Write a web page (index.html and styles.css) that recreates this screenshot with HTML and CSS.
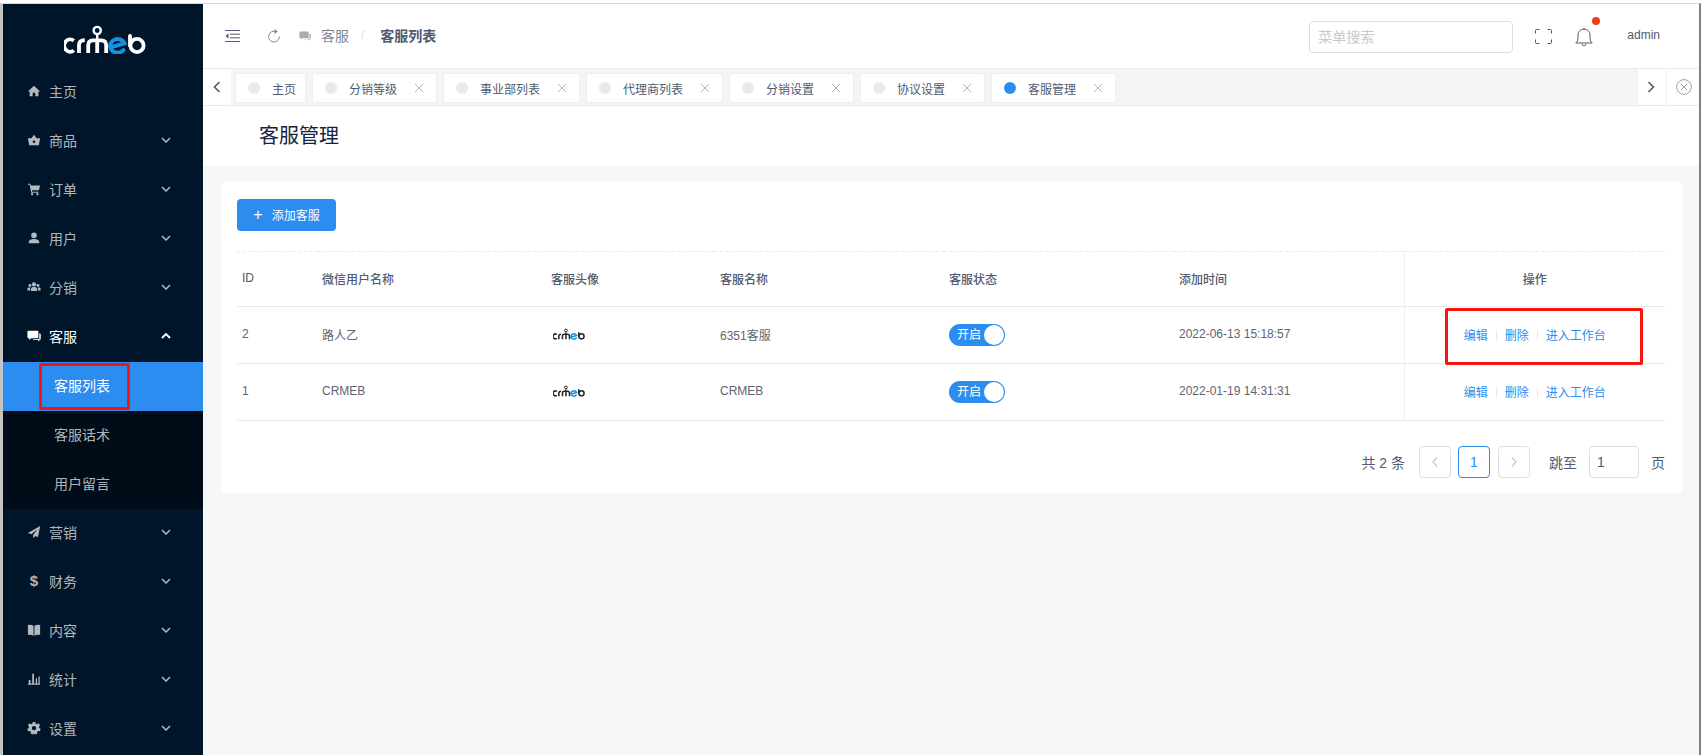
FILE: index.html
```html
<!DOCTYPE html>
<html lang="zh">
<head>
  <meta charset="UTF-8">
  <title>客服列表</title>
  <link rel="stylesheet" href="styles.css">
</head>
<body>
  <svg class="sprite" width="0" height="0">
    <symbol id="logo" viewBox="0 0 82 29">
      <g fill="none" stroke="currentColor" stroke-width="3.8">
        <path d="M9.8 15.8 A5.8 6.2 0 1 0 9.8 25.4"/>
        <path d="M15 28 V20 Q15 15.2 20.8 15.2"/>
        <path d="M24.2 28 V20.5 Q24.2 15.4 29 15.4 H37.4 Q42.2 15.4 42.2 20.5 V28 M33.2 15.4 V28"/>
      </g>
      <circle cx="33.2" cy="5.5" r="3.6" fill="none" stroke="currentColor" stroke-width="2.4"/>
      <path d="M33.2 9 V14" stroke="currentColor" stroke-width="2.4"/>
      <path d="M47.5 22 L60.5 18.5 A7.4 6.8 0 1 0 59.5 25" fill="none" stroke="#1890e0" stroke-width="4" stroke-linecap="round"/>
      <g fill="none" stroke="currentColor" stroke-width="3.8" stroke-linecap="round">
        <path d="M66 11 V20.5"/>
        <circle cx="73" cy="20.5" r="6.6"/>
      </g>
    </symbol>
    <symbol id="i-home" viewBox="0 0 16 16"><path d="M8 2 L1 8.5 H3 V14 H6.5 V10 H9.5 V14 H13 V8.5 H15 Z"/></symbol>
    <symbol id="i-basket" viewBox="0 0 16 16"><path d="M5 6 L8 2 L11 6 H15 L13.5 14 H2.5 L1 6 Z M8 8.5 A1.5 1.5 0 1 0 8 11.5 A1.5 1.5 0 1 0 8 8.5 Z" fill-rule="evenodd"/></symbol>
    <symbol id="i-cart" viewBox="0 0 16 16"><path d="M1 2 H3.8 L4.3 4 H15 L13.5 9.5 H5.6 L5.9 11 H13 V12.2 H4.8 L3 3.2 H1 Z"/><circle cx="5.8" cy="14" r="1.3"/><circle cx="12" cy="14" r="1.3"/></symbol>
    <symbol id="i-user" viewBox="0 0 16 16"><circle cx="8" cy="5" r="3.2"/><path d="M2 14 V12.5 C2 10 5 9 8 9 C11 9 14 10 14 12.5 V14 Z"/></symbol>
    <symbol id="i-team" viewBox="0 0 16 16"><circle cx="8" cy="5" r="2.4"/><circle cx="3.4" cy="6.2" r="1.7"/><circle cx="12.6" cy="6.2" r="1.7"/><path d="M4.6 12.5 V10 C4.6 8.6 6 8 8 8 C10 8 11.4 8.6 11.4 10 V12.5 Z M0.5 12 V9.8 C0.5 8.8 1.8 8.4 3.6 8.6 V12 Z M15.5 12 V9.8 C15.5 8.8 14.2 8.4 12.4 8.6 V12 Z"/></symbol>
    <symbol id="i-chat" viewBox="0 0 16 16"><path d="M1.5 2 H12 Q13 2 13 3 V9.5 Q13 10.5 12 10.5 H5 L2.5 12.5 V10.5 H1.5 Q0.5 10.5 0.5 9.5 V3 Q0.5 2 1.5 2 Z"/><path d="M14 5 H15 Q15.7 5 15.7 5.8 V11.5 Q15.7 12.2 15 12.2 H14 V14.3 L11.8 12.2 H6.5 L7 11.5 H14 Z"/></symbol>
    <symbol id="i-send" viewBox="0 0 16 16"><path d="M15 1 L1 9 L5 10.5 L12 4.5 L7 11.5 V15 L9.5 12.5 L12.5 14 Z"/></symbol>
    <symbol id="i-book" viewBox="0 0 16 16"><path d="M1 2.2 Q5 1.8 7.5 3.2 V14.5 Q5 13.2 1 13.5 Z M15 2.2 Q11 1.8 8.5 3.2 V14.5 Q11 13.2 15 13.5 Z"/></symbol>
    <symbol id="i-stats" viewBox="0 0 16 16"><path d="M1 13 H15 V14.5 H1 Z M2 9 H4 V13 H2 Z M6 2 H8 V13 H6 Z M10 7 H11.5 V13 H10 Z M13 5 H14.5 V13 H13 Z"/></symbol>
    <symbol id="i-gear" viewBox="0 0 16 16"><path fill-rule="evenodd" d="M6.6 1 H9.4 L9.8 3 L11.4 3.7 L13.1 2.6 L15 4.9 L13.7 6.4 L14 8 L15.6 9 L14.7 11.7 L12.7 11.5 L11.5 12.7 L11.7 14.6 L9 15.4 L8 14 H7.9 L7 15.4 L4.3 14.6 L4.5 12.7 L3.3 11.5 L1.3 11.7 L0.4 9 L2 8 L2.3 6.4 L1 4.9 L2.9 2.6 L4.6 3.7 L6.2 3 Z M8 5.6 A2.5 2.5 0 1 0 8 10.6 A2.5 2.5 0 1 0 8 5.6 Z"/></symbol>
    <symbol id="i-down" viewBox="0 0 10 6"><path d="M1 1 L5 5 L9 1" fill="none" stroke="currentColor" stroke-width="1.5"/></symbol>
    <symbol id="i-up" viewBox="0 0 10 6"><path d="M1 5 L5 1 L9 5" fill="none" stroke="currentColor" stroke-width="1.8"/></symbol>
    <symbol id="i-close" viewBox="0 0 10 10"><path d="M1 1 L9 9 M9 1 L1 9" fill="none" stroke="currentColor" stroke-width="0.9"/></symbol>
  </svg>

  <div class="window">
    <aside class="sidebar">
      <div class="brand"><svg class="brand-logo"><use href="#logo"/></svg></div>
      <nav>
        <a class="menu-item"><svg class="menu-icon"><use href="#i-home"/></svg><span>主页</span></a>
        <a class="menu-item"><svg class="menu-icon"><use href="#i-basket"/></svg><span>商品</span><svg class="chevron"><use href="#i-down"/></svg></a>
        <a class="menu-item"><svg class="menu-icon"><use href="#i-cart"/></svg><span>订单</span><svg class="chevron"><use href="#i-down"/></svg></a>
        <a class="menu-item"><svg class="menu-icon"><use href="#i-user"/></svg><span>用户</span><svg class="chevron"><use href="#i-down"/></svg></a>
        <a class="menu-item"><svg class="menu-icon"><use href="#i-team"/></svg><span>分销</span><svg class="chevron"><use href="#i-down"/></svg></a>
        <a class="menu-item open"><svg class="menu-icon"><use href="#i-chat"/></svg><span>客服</span><svg class="chevron"><use href="#i-up"/></svg></a>
        <div class="submenu">
          <a class="sub-item active">客服列表<i class="mark mark-menu"></i></a>
          <a class="sub-item">客服话术</a>
          <a class="sub-item">用户留言</a>
        </div>
        <a class="menu-item"><svg class="menu-icon"><use href="#i-send"/></svg><span>营销</span><svg class="chevron"><use href="#i-down"/></svg></a>
        <a class="menu-item"><b class="menu-icon dollar">$</b><span>财务</span><svg class="chevron"><use href="#i-down"/></svg></a>
        <a class="menu-item"><svg class="menu-icon"><use href="#i-book"/></svg><span>内容</span><svg class="chevron"><use href="#i-down"/></svg></a>
        <a class="menu-item"><svg class="menu-icon"><use href="#i-stats"/></svg><span>统计</span><svg class="chevron"><use href="#i-down"/></svg></a>
        <a class="menu-item"><svg class="menu-icon"><use href="#i-gear"/></svg><span>设置</span><svg class="chevron"><use href="#i-down"/></svg></a>
      </nav>
    </aside>

    <main class="main">
      <header class="topbar">
        <svg class="fold-icon" viewBox="0 0 15 12"><path d="M0 .5 H15 M5 4.2 H15 M5 7.8 H15 M0 11.5 H15" fill="none" stroke="#515a6e" stroke-width="1"/><path d="M3.5 3.6 L0.5 6 L3.5 8.4 Z" fill="#515a6e"/></svg>
        <svg class="refresh-icon" viewBox="0 0 14 14"><path d="M9 2.6 A5.4 5.4 0 1 0 12.4 7.5" fill="none" stroke="#808695" stroke-width="1"/><path d="M7.5 0 L10.8 2.6 L7.5 5 Z" fill="#808695"/></svg>
        <svg class="crumb-icon"><use href="#i-chat"/></svg>
        <span class="crumb">客服</span>
        <span class="crumb-sep">/</span>
        <span class="crumb-current">客服列表</span>
        <div class="topbar-right">
          <div class="search">菜单搜索</div>
          <svg class="full-icon" viewBox="0 0 17 15"><path d="M.5 4.5 V1.5 Q.5 .5 1.5 .5 H4.5 M12.5 .5 H15.5 Q16.5 .5 16.5 1.5 V4.5 M16.5 10.5 V13.5 Q16.5 14.5 15.5 14.5 H12.5 M4.5 14.5 H1.5 Q.5 14.5 .5 13.5 V10.5" fill="none" stroke="#515a6e" stroke-width="1"/></svg>
          <span class="bell">
            <svg class="bell-icon" viewBox="0 0 18 20"><path d="M.8 16 Q3 14.5 3 11 V8 A6 6 0 0 1 15 8 V11 Q15 14.5 17.2 16 Z M9 2 V1 M6.8 17 Q9 20.5 11.2 17" fill="none" stroke="#515a6e" stroke-width="1"/></svg>
            <i class="bell-dot"></i>
          </span>
          <span class="user-name">admin</span>
        </div>
      </header>

      <div class="tabs">
        <div class="tab-arrow"><svg viewBox="0 0 8 12"><path d="M6.5 1 L1.5 6 L6.5 11" fill="none" stroke="#515a6e" stroke-width="1.6"/></svg></div>
        <div class="tab-list">
          <div class="tab home-tab"><i class="dot"></i>主页</div>
          <div class="tab"><i class="dot"></i>分销等级<svg class="tab-close"><use href="#i-close"/></svg></div>
          <div class="tab"><i class="dot"></i>事业部列表<svg class="tab-close"><use href="#i-close"/></svg></div>
          <div class="tab"><i class="dot"></i>代理商列表<svg class="tab-close"><use href="#i-close"/></svg></div>
          <div class="tab"><i class="dot"></i>分销设置<svg class="tab-close"><use href="#i-close"/></svg></div>
          <div class="tab"><i class="dot"></i>协议设置<svg class="tab-close"><use href="#i-close"/></svg></div>
          <div class="tab"><i class="dot dot-on"></i>客服管理<svg class="tab-close"><use href="#i-close"/></svg></div>
        </div>
        <div class="tab-arrow tab-next"><svg viewBox="0 0 8 12"><path d="M1.5 1 L6.5 6 L1.5 11" fill="none" stroke="#515a6e" stroke-width="1.6"/></svg></div>
        <div class="tab-arrow tab-end"><svg viewBox="0 0 16 16"><circle cx="8" cy="8" r="7.4" fill="none" stroke="#808695" stroke-width=".8"/><path d="M5 5 L11 11 M11 5 L5 11" fill="none" stroke="#808695" stroke-width=".8"/></svg></div>
      </div>

      <div class="page-title">客服管理</div>

      <div class="content">
        <section class="card">
          <button class="add-btn"><span class="plus">+</span>添加客服</button>
          <table class="list">
            <colgroup>
              <col class="c-id"><col class="c-name"><col class="c-avatar"><col class="c-nick"><col class="c-status"><col class="c-time"><col class="c-ops">
            </colgroup>
            <thead>
              <tr>
                <th class="plain">ID</th><th>微信用户名称</th><th>客服头像</th><th>客服名称</th><th>客服状态</th><th>添加时间</th><th class="ops">操作</th>
              </tr>
            </thead>
            <tbody>
              <tr>
                <td>2</td><td>路人乙</td>
                <td><svg class="avatar"><use href="#logo"/></svg></td>
                <td>6351客服</td>
                <td><span class="switch">开启<i></i></span></td>
                <td>2022-06-13 15:18:57</td>
                <td class="ops"><a>编辑</a><i class="bar"></i><a>删除</a><i class="bar"></i><a>进入工作台</a><i class="mark mark-ops"></i></td>
              </tr>
              <tr>
                <td>1</td><td>CRMEB</td>
                <td><svg class="avatar"><use href="#logo"/></svg></td>
                <td>CRMEB</td>
                <td><span class="switch">开启<i></i></span></td>
                <td>2022-01-19 14:31:31</td>
                <td class="ops"><a>编辑</a><i class="bar"></i><a>删除</a><i class="bar"></i><a>进入工作台</a></td>
              </tr>
            </tbody>
          </table>
          <div class="pager">
            <span class="total">共 2 条</span>
            <span class="page-btn"><svg viewBox="0 0 8 12"><path d="M6 1.5 L2 6 L6 10.5" fill="none" stroke="#c5c8ce" stroke-width="1.2"/></svg></span>
            <span class="page-btn current">1</span>
            <span class="page-btn"><svg viewBox="0 0 8 12"><path d="M2 1.5 L6 6 L2 10.5" fill="none" stroke="#c5c8ce" stroke-width="1.2"/></svg></span>
            <span class="jump">跳至</span>
            <span class="jump-input">1</span>
            <span class="jump-end">页</span>
          </div>
        </section>
      </div>
    </main>
  </div>
</body>
</html>
```
FILE: styles.css
```css
* { box-sizing: border-box; }
html, body { height: 100%; }
body {
  margin: 0;
  padding-top: 3px;
  overflow: hidden;
  background: #fff;
  font-family: "Liberation Sans", "Noto Sans CJK SC", sans-serif;
  font-size: 12px;
  color: #515a6e;
}
i { font-style: normal; }
.sprite { position: absolute; }

.window {
  display: flex;
  height: 752px;
  border-top: 1px solid #d9d9d9;
  border-left: 3px solid #c4c4c4;
  border-right: 2px solid #808080;
}

/* sidebar */
.sidebar {
  width: 200px;
  flex: none;
  background: #001529;
  color: rgba(255, 255, 255, .7);
  font-size: 14px;
}
.brand {
  height: 64px;
  padding: 21px 0 0 61px;
}
.brand-logo { display: block; width: 82px; height: 29px; color: #fff; }
.menu-item {
  display: flex;
  align-items: center;
  height: 49px;
  padding: 0 0 3px 24px;
}
.menu-item span { margin-left: 8px; }
.menu-item.open { color: #fff; }
.menu-icon {
  width: 14px;
  height: 14px;
  fill: currentColor;
  text-align: center;
  line-height: 14px;
}
.dollar { font-size: 15px; }
.chevron { width: 10px; height: 6px; margin-left: auto; margin-right: 32px; }
.submenu { background: #000c17; }
.sub-item {
  position: relative;
  display: block;
  height: 49px;
  line-height: 49px;
  padding-left: 51px;
}
.sub-item.active { background: #2d8cf0; color: #fff; }
.mark {
  position: absolute;
  border: 3px solid #f5140f;
  border-radius: 2px;
}
.mark-menu { left: 36px; top: 1px; width: 91px; height: 47px; }

/* top bar */
.main { flex: 1; min-width: 0; display: flex; flex-direction: column; background: #f5f7f9; }
.topbar {
  display: flex;
  align-items: center;
  height: 64px;
  padding-left: 22px;
  background: #fff;
  font-size: 12px;
}
.fold-icon { width: 15px; height: 12px; }
.refresh-icon { width: 14px; height: 14px; margin-left: 27px; }
.crumb-icon { width: 12px; height: 12px; margin-left: 18px; fill: #a8abb2; }
.crumb { margin: 0 0 2px 10px; color: #808695; font-size: 14px; }
.crumb-sep { margin: 0 0 2px 12px; color: #dcdee2; }
.crumb-current { margin: 0 0 2px 16px; font-size: 14px; font-weight: 700; color: #515a6e; }
.topbar-right { display: flex; align-items: center; margin-left: auto; }
.search {
  width: 204px;
  height: 32px;
  padding: 0 8px;
  margin-top: 1px;
  border: 1px solid #dcdee2;
  border-radius: 4px;
  color: #c5c8ce;
  font-size: 14px;
  line-height: 30px;
}
.full-icon { width: 17px; height: 15px; margin-left: 22px; }
.bell { position: relative; display: block; width: 18px; height: 20px; margin-left: 23px; margin-top: 2px; }
.bell-icon { display: block; width: 18px; height: 20px; }
.bell-dot {
  position: absolute;
  right: -7px;
  top: -10px;
  width: 8px;
  height: 8px;
  border-radius: 50%;
  background: #ed4014;
}
.user-name { margin-left: 34px; margin-right: 39px; margin-bottom: 2px; }

/* tabs */
.tabs {
  display: flex;
  height: 38px;
  background: #f3f4f6;
  border-top: 1px solid #ebebeb;
  border-bottom: 1px solid #e8eaec;
}
.tab-arrow {
  display: flex;
  align-items: center;
  justify-content: center;
  width: 28px;
  flex: none;
  background: #fff;
}
.tab-arrow svg { width: 8px; height: 12px; }
.tab-next { margin-left: auto; width: 29px; padding-right: 2px; border-right: 1px solid #eee; }
.tab-end { width: 32px; padding-left: 2px; }
.tab-end svg { width: 16px; height: 16px; }
.tab-list { display: flex; gap: 6px; padding: 4px 0 0 4px; }
.tab {
  display: flex;
  align-items: center;
  height: 30px;
  padding: 0 12px 0 12px;
  background: #fff;
  border-radius: 2px;
  border: 1px solid #eceef1;
}
.home-tab { padding-right: 9px; }
.dot {
  width: 12px;
  height: 12px;
  margin-right: 12px;
  border-radius: 50%;
  background: #e8eaec;
}
.dot-on { background: #2d8cf0; }
.tab-close { width: 10px; height: 10px; margin-left: 17px; color: #a8abb2; }

.page-title {
  height: 60px;
  padding-left: 56px;
  background: #fff;
  color: #17233d;
  font-size: 20px;
  line-height: 60px;
}

/* card */
.content { padding: 16px 17px 0 18px; }
.card {
  height: 311px;
  padding: 17px 16px 0;
  background: #fff;
  border-radius: 4px;
}
.add-btn {
  display: block;
  width: 99px;
  height: 32px;
  padding: 0;
  border: none;
  border-radius: 4px;
  background: #2d8cf0;
  color: #fff;
  font: inherit;
}
.plus { margin-right: 9px; font-size: 16px; font-weight: 400; }
.list {
  width: 1428px;
  margin-top: 20px;
  border-collapse: collapse;
  table-layout: fixed;
  border-top: 1px dashed #e8eaec;
}
.c-id { width: 80px; }
.c-name { width: 229px; }
.c-avatar { width: 169px; }
.c-nick { width: 229px; }
.c-status { width: 230px; }
.c-time { width: 230px; }
.c-ops { width: 261px; }
.list th, .list td {
  height: 57px;
  padding: 0 5px 2px;
  text-align: left;
  border-bottom: 1px solid #e8eaec;
  font-size: 12px;
  color: #606470;
}
.list th { height: 55px; font-weight: 500; color: #515a6e; }
.list th.plain { font-weight: 400; }
.list .ops {
  position: relative;
  text-align: center;
  border-left: 1px solid #f0f0f0;
  box-shadow: -2px 0 6px -2px rgba(0, 0, 0, .06);
}
.ops a { color: #2d8cf0; }
.bar {
  display: inline-block;
  width: 1px;
  height: 11px;
  margin: 0 8px;
  background: #e8eaec;
  vertical-align: -1px;
}
.mark-ops { left: 40px; top: 1px; width: 198px; height: 57px; }
.avatar { display: block; width: 32px; height: 12px; margin-left: 2px; color: #222; }
.switch {
  position: relative;
  display: inline-block;
  width: 56px;
  height: 22px;
  margin-top: 2px;
  padding-left: 8px;
  border-radius: 11px;
  background: #2d8cf0;
  color: #fff;
  line-height: 22px;
  vertical-align: middle;
}
.switch i {
  position: absolute;
  right: 1px;
  top: 1px;
  width: 20px;
  height: 20px;
  border-radius: 50%;
  background: #fff;
}

/* pager */
.pager {
  display: flex;
  align-items: center;
  justify-content: flex-end;
  width: 1428px;
  margin-top: 24px;
  font-size: 14px;
}
.total { margin-right: 14px; }
.page-btn {
  display: flex;
  align-items: center;
  justify-content: center;
  width: 32px;
  height: 32px;
  margin-right: 7px;
  border: 1px solid #dcdee2;
  border-radius: 4px;
}
.page-btn svg { width: 8px; height: 12px; }
.page-btn.current { margin-right: 8px; border-color: #2d8cf0; color: #2d8cf0; }
.jump { margin-left: 12px; }
.jump-input {
  width: 50px;
  height: 32px;
  margin: 1px 12px 0 12px;
  padding-left: 7px;
  border: 1px solid #dcdee2;
  border-radius: 4px;
  line-height: 30px;
  font-size: 14px;
}
```
